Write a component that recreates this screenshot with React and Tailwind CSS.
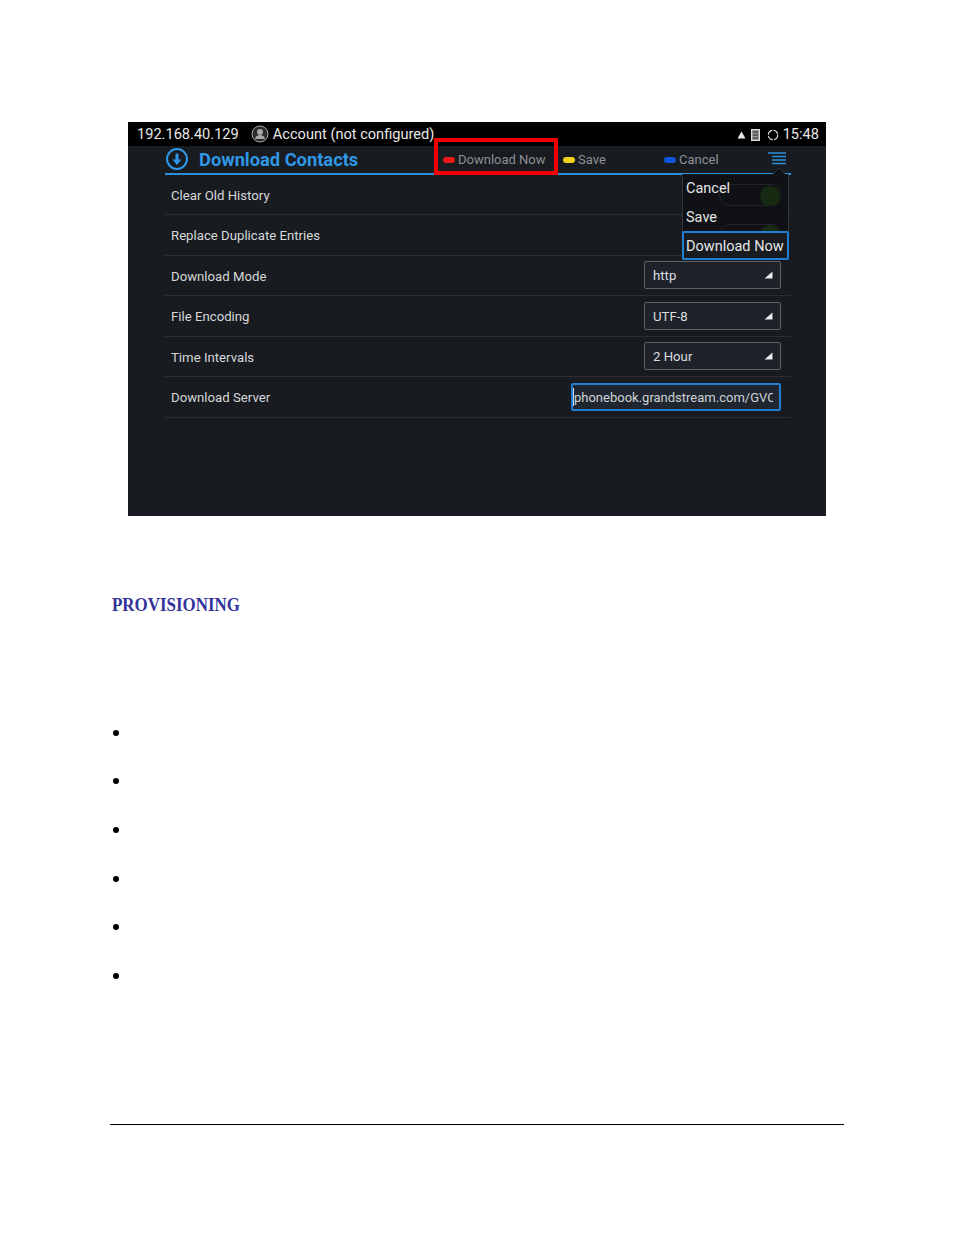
const ROWS = [
  { label: "Clear Old History" },
  { label: "Replace Duplicate Entries" },
  { label: "Download Mode", select: "http" },
  { label: "File Encoding", select: "UTF-8" },
  { label: "Time Intervals", select: "2 Hour" },
  { label: "Download Server", input: "phonebook.grandstream.com/GVC" },
];

function Corner() {
  return (
    <svg width="9" height="8" viewBox="0 0 9 8" className="shrink-0">
      <path d="M8.500 0.500V7.500H0.500Z" fill="#e8eaec" />
    </svg>
  );
}

function Row({ row }) {
  return (
    <div className="flex h-[40.5px] items-center justify-between border-b border-[#2b2e33] pl-[6px] pr-[10px]">
      <span className="pt-[3px] text-[13.2px] text-[#d6d8da]">{row.label}</span>
      {row.select && (
        <div className="flex h-[28px] w-[137px] items-center justify-between rounded-[2px] border border-[#5d6168] bg-[#1f2329] pl-[8px] pr-[7px] text-[13.2px] text-[#dcdee0]">
          <span className="pt-[2px]">{row.select}</span>
          <Corner />
        </div>
      )}
      {row.input && (
        <div className="flex h-[28px] w-[210px] items-center overflow-hidden rounded-[2px] border-2 border-[#1f7fd0] bg-[#1f2630] pr-[6px] text-[13px] text-[#cfd2d5]">
          <span className="h-[18px] w-px shrink-0 bg-[#d8dadc]" />
          <span className="overflow-hidden whitespace-nowrap pt-[2px]">{row.input}</span>
        </div>
      )}
    </div>
  );
}

function SoftKey({ color, label, className }) {
  return (
    <div className={"flex items-center gap-[3px] pt-[1px] text-[13px] text-[#8d9094] " + className}>
      <span className={"h-[6px] w-[12px] rounded-full " + color} />
      {label}
    </div>
  );
}

export default function App() {
  return (
    <div className="flex h-[1235px] w-[954px] flex-col bg-white font-['Roboto',sans-serif]">
      <div className="relative ml-[128px] mt-[122px] h-[394px] w-[698px] bg-[#181b20]">
        <div className="flex h-[24px] items-center justify-between bg-black pl-[9px] pr-[7px] pt-[2px] text-[14.6px] text-[#e8e8e8]">
          <div className="flex items-center">
            <span>192.168.40.129</span>
            <svg width="18" height="18" viewBox="0 0 18 18" className="ml-[12px] -mt-[2px]">
              <circle cx="9" cy="9" r="8" fill="#2a2a2a" stroke="#a8a8a8" strokeWidth="1" />
              <circle cx="9" cy="7" r="3" fill="#a8a8a8" />
              <path d="M4 14c.6-3 2.600-4 5-4s4.400 1 5 4z" fill="#a8a8a8" />
            </svg>
            <span className="ml-[4px]">Account (not configured)</span>
          </div>
          <div className="flex items-center">
            <svg width="9" height="8" viewBox="0 0 9 8">
              <path d="M4.500 0.500L8.500 7.500H0.500Z" fill="#e8e8e8" />
            </svg>
            <svg width="9" height="12" viewBox="0 0 9 12" className="ml-[5px]">
              <rect x="0.500" y="0.500" width="8" height="11" fill="#9a9a9a" stroke="#e0e0e0" />
              <path d="M2 3h5M2 6h5M2 9h5" stroke="#222" strokeWidth="1" />
            </svg>
            <svg width="12" height="12" viewBox="0 0 12 12" className="ml-[7px]">
              <circle cx="6" cy="6" r="4.700" fill="none" stroke="#d8d8d8" strokeWidth="1.200" strokeDasharray="6 1.400" />
            </svg>
            <span className="ml-[4px]">15:48</span>
          </div>
        </div>

        <div className="ml-[37px] mr-[35px] flex h-[28.5px] items-center border-b-2 border-[#2b8fdc]">
          <svg width="24" height="24" viewBox="0 0 24 24" className="shrink-0">
            <circle cx="12" cy="12" r="10" fill="none" stroke="#2f97e6" strokeWidth="2" />
            <path d="M12 6.500v7" stroke="#2f97e6" strokeWidth="3" />
            <path d="M7.500 12.500h9L12 18z" fill="#2f97e6" />
          </svg>
          <span className="ml-[10px] w-[244px] text-[18.3px] font-bold text-[#2f97e6]">Download Contacts</span>
          <SoftKey color="bg-[#f01818]" label="Download Now" className="w-[120px]" />
          <SoftKey color="bg-[#f2d21a]" label="Save" className="w-[101px]" />
          <SoftKey color="bg-[#0f55d8]" label="Cancel" className="w-[104px]" />
          <svg width="19" height="14" viewBox="0 0 19 14" className="shrink-0">
            <path d="M0 1h18M4 4.500h14M4 8h14M4 11.500h14" stroke="#2f8fd8" strokeWidth="1.500" />
          </svg>
        </div>

        <div className="ml-[37px] mr-[35px]">
          {ROWS.map((row) => (
            <Row key={row.label} row={row} />
          ))}
        </div>

        {/* softkey highlight drawn over the screenshot */}
        <div className="absolute left-[306px] top-[16px] h-[37px] w-[124px] border-4 border-[#f00000]" />

        {/* options menu */}
        <div className="absolute left-[554px] top-[52px] h-[86px] w-[107px] border-x border-[#33363b] bg-[#0f1114]/95 text-[14.5px] text-[#e4e6e8]">
          <svg width="12" height="6" viewBox="0 0 12 6" className="absolute -top-[6px] left-[90px]">
            <path d="M0 6L6 0L12 6" fill="#0f1114" stroke="#33363b" />
          </svg>
          <div className="absolute left-[36px] top-[10px] h-[22px] w-[63px] rounded-full border border-[#202327]" />
          <div className="absolute left-[77px] top-[12px] h-[20px] w-[20px] rounded-full bg-[#172a12]" />
          <div className="absolute left-[36px] top-[50px] h-[22px] w-[63px] rounded-full border border-[#202327]" />
          <div className="absolute left-[77px] top-[51px] h-[20px] w-[20px] rounded-full bg-[#172a12]" />
          <div className="relative flex h-[28px] items-center pl-[3px] pt-[1px]">Cancel</div>
          <div className="relative flex h-[29px] items-center pl-[3px] pt-[3px]">Save</div>
          <div className="relative -mx-px flex h-[29px] items-center rounded-[2px] border-2 border-[#1f7fd0] bg-[#181b20] pl-[2px] pt-[2px] whitespace-nowrap">
            Download Now
          </div>
        </div>
      </div>

      <h2 className="ml-[112px] mt-[77px] origin-left scale-x-[0.915] font-['Liberation_Serif',serif] text-[18.5px] font-bold leading-[24px] text-[#333399]">
        PROVISIONING
      </h2>

      <ul className="ml-[113px] mt-[91.5px] flex flex-col">
        {[0, 1, 2, 3, 4, 5].map((i) => (
          <li key={i} className="flex h-[48.6px] items-center">
            <span className="h-[6px] w-[6px] rounded-full bg-black" />
          </li>
        ))}
      </ul>

      <div className="mx-[110px] mt-[124px] border-t border-black" />
    </div>
  );
}
